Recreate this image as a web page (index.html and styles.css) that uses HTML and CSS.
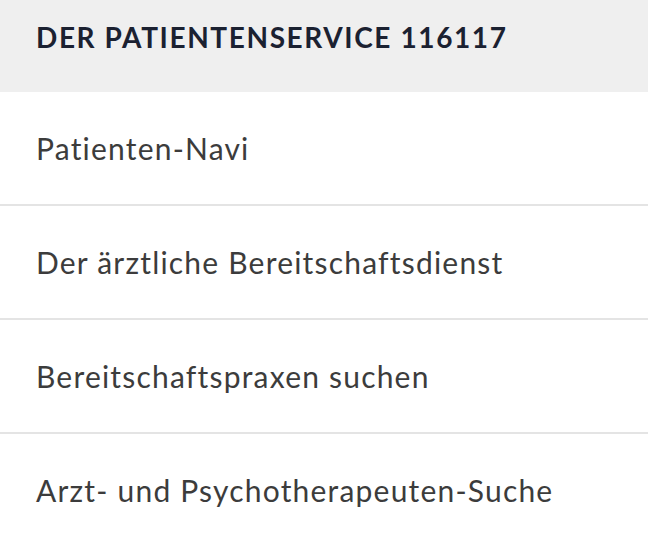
FILE: index.html
```html
<!DOCTYPE html>
<html lang="de">
<head>
    <meta charset="UTF-8">
    <meta name="viewport" content="width=device-width, initial-scale=1.0">
    <title>Der Patientenservice 116117</title>
    <link rel="stylesheet" href="styles.css">
</head>
<body>
    <nav class="service-menu">
        <h2 class="menu-title">DER PATIENTENSERVICE 116117</h2>
        <ul class="menu-list">
            <li><a href="#">Patienten-Navi</a></li>
            <li><a href="#">Der ärztliche Bereitschaftsdienst</a></li>
            <li><a href="#">Bereitschaftspraxen suchen</a></li>
            <li><a href="#">Arzt- und Psychotherapeuten-Suche</a></li>
        </ul>
    </nav>
</body>
</html>
```

FILE: styles.css
```css
body {
    margin: 0;
    font-family: Lato, "Noto Sans", sans-serif;
    background-color: #fff;
}
.menu-title {
    margin: 0;
    height: 92px;
    box-sizing: border-box;
    padding: 19px 36px 0;
    background-color: #efefef;
    color: #1b2131;
    font-size: 28px;
    font-weight: 700;
    line-height: 36px;
    letter-spacing: 1.6px;
}
.menu-list {
    list-style: none;
    margin: 0;
    padding: 0;
}
.menu-list li {
    border-bottom: 2px solid #e4e4e4;
}
.menu-list li:last-child {
    border-bottom: none;
}
.menu-list a {
    display: flex;
    align-items: center;
    height: 112px;
    padding: 0 36px;
    color: #3c3c3c;
    font-size: 30px;
    letter-spacing: 1.2px;
    text-decoration: none;
}
```
